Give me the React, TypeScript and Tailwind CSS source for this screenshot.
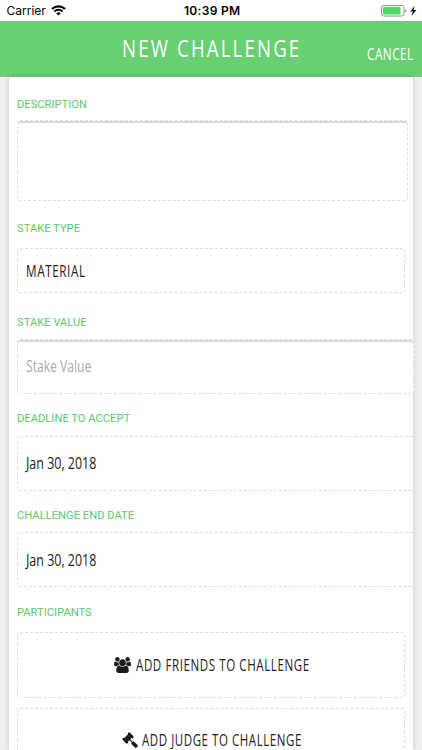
import type { ReactNode } from 'react';

function Narrow({ children, className }: { children: ReactNode; className: string }) {
  return (
    <span className={`inline-block origin-left whitespace-nowrap font-['Open_Sans',sans-serif] ${className}`}>
      {children}
    </span>
  );
}

function Label({ children }: { children: ReactNode }) {
  return (
    <div className="h-[14px] whitespace-nowrap font-[Roboto,sans-serif] text-[11.2px] leading-[14px] text-[#5cc96c]">
      {children}
    </div>
  );
}

function UsersIcon() {
  return (
    <svg viewBox="0 0 1920 1792" className="h-4 w-[17px] shrink-0 fill-[#1c1c1c]">
      <path d="M593 896q-162 5-265 128h-134q-82 0-138-40.5t-56-118.5q0-353 124-353 6 0 43.5 21t97.5 42.5 119 21.5q67 0 133-23-5 37-5 66 0 139 81 256zm1071 637q0 120-73 189.5t-194 69.5h-874q-121 0-194-69.5t-73-189.5q0-53 3.5-103.5t14-109 26.5-108.5 43-97.5 62-81 85.5-53.5 111.5-20q10 0 43 21.5t73 48 107 48 135 21.5 135-21.5 107-48 73-48 43-21.5q61 0 111.5 20t85.5 53.5 62 81 43 97.5 26.5 108.5 14 109 3.5 103.5zm-1024-1277q0 106-75 181t-181 75-181-75-75-181 75-181 181-75 181 75 75 181zm704 384q0 159-112.5 271.5t-271.5 112.5-271.5-112.5-112.5-271.5 112.5-271.5 271.5-112.5 271.5 112.5 112.5 271.5zm576 225q0 78-56 118.5t-138 40.5h-134q-103-123-265-128 81-117 81-256 0-29-5-66 66 23 133 23 59 0 119-21.5t97.5-42.5 43.5-21q124 0 124 353zm-128-609q0 106-75 181t-181 75-181-75-75-181 75-181 181-75 181 75 75 181z" />
    </svg>
  );
}

function GavelIcon() {
  return (
    <svg viewBox="0 0 1792 1792" className="h-4 w-4 shrink-0 fill-[#1c1c1c]">
      <path d="M1771 1536q0 53-37 90l-107 108q-39 37-91 37-53 0-90-37l-363-364q-38-36-38-90 0-53 43-96l-256-256-126 126q-14 14-34 14t-34-14q2 2 12.5 12t12.5 13 10 11.5 10 13.5 6 13.5 5.5 16.5 1.5 18q0 38-28 68-3 3-16.5 18t-19 20.5-18.5 16.5-22 15.5-22 9-26 4.5q-40 0-68-28l-408-408q-28-28-28-68 0-13 4.5-26t9-22 15.5-22 16.5-18.5 20.5-19 18-16.5q30-28 68-28 10 0 18 1.5t16.5 5.5 13.5 6 13.5 10 11.5 10 13 12.5 12 12.5q-14-14-14-34t14-34l348-348q14-14 34-14t34 14q-2-2-12.5-12t-12.5-13-10-11.5-10-13.5-6-13.5-5.5-16.5-1.5-18q0-38 28-68 3-3 16.5-18t19-20.5 18.5-16.5 22-15.5 22-9 26-4.5q40 0 68 28l408 408q28 28 28 68 0 13-4.5 26t-9 22-15.5 22-16.5 18.5-20.5 19-18 16.5q-30 28-68 28-10 0-18-1.5t-16.5-5.5-13.5-6-13.5-10-11.5-10-13-12.5-12-12.5q14 14 14 34t-14 34l-126 126 256 256q43-43 96-43 52 0 91 37l363 363q37 39 37 91z" />
    </svg>
  );
}

function StatusBar() {
  return (
    <div className="flex h-[21px] items-center bg-white font-[Inter,sans-serif] text-black">
      <div className="flex w-[184px] items-center gap-[5px] pl-[6.5px]">
        <span className="w-[39px] whitespace-nowrap text-[12px] leading-none">Carrier</span>
        <svg viewBox="0 0 14 10" className="h-[10.5px] w-[15px]">
          <path d="M0.8 3.9a8.8 8.8 0 0 1 12.4 0" fill="none" stroke="#000" strokeWidth="2" />
          <path d="M3.1 6.2a5.5 5.5 0 0 1 7.8 0" fill="none" stroke="#000" strokeWidth="1.8" />
          <path d="M4.9 7.9a3 3 0 0 1 4.2 0L7 10z" />
        </svg>
      </div>
      <span className="w-[197px] whitespace-nowrap text-[12px] font-semibold leading-none tracking-[0.3px]">10:39 PM</span>
      <svg viewBox="0 0 36 12" className="h-3 w-9">
        <rect x="0.5" y="0.5" width="22.5" height="10.5" rx="2.2" fill="#fff" stroke="#8e8e8e" />
        <rect x="2" y="2" width="17.5" height="7.5" rx="0.8" fill="#4cd864" />
        <path d="M24.3 4v3.6q1.2-.5 1.2-1.8T24.3 4z" fill="#8e8e8e" />
        <path d="M33.6 0.8 29.4 6.5h2.5l-1.5 4.6 4.9-6.1h-2.7z" />
      </svg>
    </div>
  );
}

export default function App() {
  return (
    <div className="flex h-[750px] w-[422px] flex-col overflow-hidden bg-[#efefef]">
      <StatusBar />
      <header className="flex h-14 shrink-0 border-b border-[#9fb7a2] bg-[#68d072] text-white">
        <div className="w-[367px] pl-[121.5px] pt-[10px]">
          <Narrow className="scale-x-[0.775] text-[24px] leading-[34px] tracking-[2.8px]">NEW CHALLENGE</Narrow>
        </div>
        <div className="w-[46px] pt-[21px]">
          <Narrow className="scale-x-[0.74] text-[16px] leading-[22px] tracking-[0.6px]">CANCEL</Narrow>
        </div>
      </header>
      <main className="ml-[9px] h-[673px] w-[404px] bg-white pl-2 pt-[21px] shadow-[0_0_5px_rgba(0,0,0,0.18)]">
        <Label>DESCRIPTION</Label>
        <div className="mt-2 h-[81px] w-[391px] rounded-[3px] border border-dashed border-[#dedede] shadow-[inset_0_2px_0_#d9d9d9]" />

        <div className="mt-[21px]">
          <Label>STAKE TYPE</Label>
        </div>
        <div className="mt-3 h-[45px] w-[388px] rounded-[3px] border border-dashed border-[#dedede] pl-2 pt-[10px]">
          <Narrow className="scale-x-[0.755] text-[15.5px] font-medium leading-[24px] tracking-[0.8px] text-[#222]">MATERIAL</Narrow>
        </div>

        <div className="mt-[23px]">
          <Label>STAKE VALUE</Label>
        </div>
        <div className="mt-[9px] h-[55px] w-[397px] rounded-[3px] border border-dashed border-[#dedede] bg-white pl-2 pt-[14px] shadow-[inset_0_2px_0_#d9d9d9]">
          <Narrow className="scale-x-[0.735] text-[16.5px] leading-[22px] text-[#aaa]">Stake Value</Narrow>
        </div>

        <div className="mt-[18px]">
          <Label>DEADLINE TO ACCEPT</Label>
        </div>
        <div className="mt-[10px] h-[55px] w-[396px] rounded-l-[3px] border border-r-0 border-dashed border-[#dedede] pl-2 pt-[14px]">
          <Narrow className="scale-x-[0.755] text-[16.5px] font-medium leading-[22px] text-[#222]">Jan 30, 2018</Narrow>
        </div>

        <div className="mt-[18px]">
          <Label>CHALLENGE END DATE</Label>
        </div>
        <div className="mt-[9px] h-[55px] w-[396px] rounded-l-[3px] border border-r-0 border-dashed border-[#dedede] pl-2 pt-[15px]">
          <Narrow className="scale-x-[0.755] text-[16.5px] font-medium leading-[22px] text-[#222]">Jan 30, 2018</Narrow>
        </div>

        <div className="mt-[19px]">
          <Label>PARTICIPANTS</Label>
        </div>
        <div className="mt-3 flex h-[66px] w-[388px] items-start rounded-[3px] border border-dashed border-[#dedede] pl-[96px] pt-[20px]">
          <div className="pt-[4px]">
            <UsersIcon />
          </div>
          <Narrow className="ml-[4.5px] scale-x-[0.748] text-[15.5px] leading-[24px] tracking-[0.75px] text-[#222]">ADD FRIENDS TO CHALLENGE</Narrow>
        </div>
        <div className="mt-[9.5px] flex h-[66px] w-[388px] items-start rounded-[3px] border border-dashed border-[#dedede] pl-[104px] pt-[19.5px]">
          <div className="pt-[4px]">
            <GavelIcon />
          </div>
          <Narrow className="ml-[4px] scale-x-[0.742] text-[15.5px] leading-[24px] tracking-[0.75px] text-[#222]">ADD JUDGE TO CHALLENGE</Narrow>
        </div>
      </main>
    </div>
  );
}
